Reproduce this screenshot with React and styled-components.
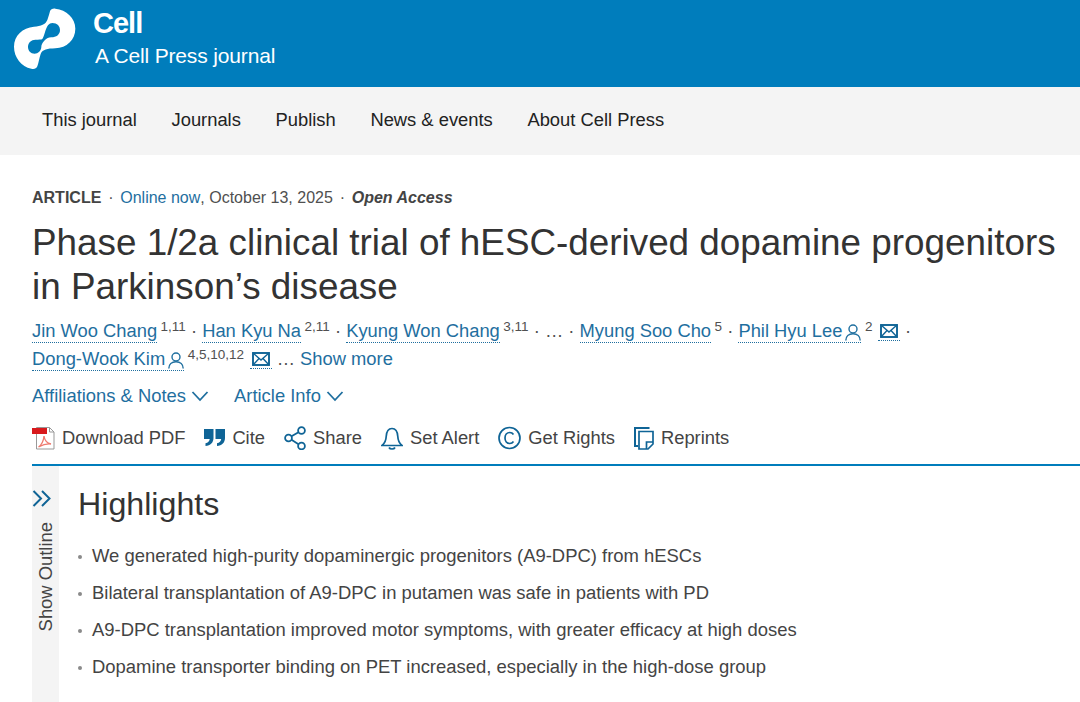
import React from "react";
import styled, { createGlobalStyle } from "styled-components";

const GlobalStyle = createGlobalStyle`
  html, body {
    margin: 0;
    padding: 0;
    background: #fff;
    overflow: hidden;
  }
  body {
    font-family: "Liberation Sans", Arial, sans-serif;
    color: #333;
  }
`;

const Page = styled.div`
  width: 1080px;
  height: 702px;
  overflow: hidden;
`;

const Banner = styled.header`
  height: 87px;
  background: #007dbc;
  display: flex;
  padding-left: 8px;
  gap: 13px;
  box-sizing: border-box;
  color: #fff;
`;

const Logo = styled.svg`
  width: 72px;
  height: 70px;
  margin-top: 4px;
  flex: none;
`;

const BannerText = styled.div`
  display: flex;
  flex-direction: column;
`;

const JournalName = styled.div`
  font-size: 29px;
  font-weight: 700;
  letter-spacing: -1px;
  line-height: 32px;
  margin-top: 7px;
`;

const JournalSub = styled.div`
  font-size: 21px;
  line-height: 26px;
  margin-top: 4px;
  margin-left: 2px;
  letter-spacing: -0.15px;
`;

const NavBar = styled.nav`
  height: 68px;
  background: #f4f4f4;
  display: flex;
  align-items: center;
  gap: 34.7px;
  padding: 0 0 3px 42px;
  box-sizing: border-box;
  font-size: 18.35px;
  color: #222;
`;

const Main = styled.main`
  padding: 33px 0 0 32px;
`;

const MetaLine = styled.div`
  font-size: 16px;
  line-height: 20px;
  color: #505050;
  display: flex;
  white-space: pre;
`;

const ArticleType = styled.b`
  color: #444;
`;

const MetaDot = styled.span`
  margin: 0 6.8px;
`;

const Online = styled.span`
  color: #1f6f9f;
`;

const OpenAccess = styled.b`
  font-style: italic;
  color: #444;
`;

const Title = styled.h1`
  font-size: 36.85px;
  font-weight: 400;
  line-height: 44px;
  margin: 13px 0 0;
  color: #333;
  white-space: nowrap;
`;

const Authors = styled.div`
  margin-top: 8px;
  font-size: 18.35px;
  line-height: 28px;
  color: #505050;
  white-space: nowrap;
`;

const AuthorLine = styled.div`
  height: 28px;
`;

const Author = styled.a`
  color: #1f6f9f;
  border-bottom: 1px dotted #1f6f9f;
  padding-bottom: 1px;
`;

const Sup = styled.sup`
  font-size: 13.5px;
  line-height: 0;
  color: #505050;
  vertical-align: 6px;
  margin-left: 3.5px;
`;

const Dot = styled.span`
  margin: 0 5.1px;
  color: #505050;
`;

const MailLink = styled.a`
  display: inline-block;
  border-bottom: 1px dotted #1f6f9f;
  margin-left: 5.5px;
  padding: 0 2px;
  height: 17px;
  line-height: 14px;
  vertical-align: 1px;
`;

const SmallIcon = styled.svg`
  vertical-align: middle;
`;

const PersonGlyph = styled(SmallIcon)`
  margin-left: 3px;
`;

const ShowMore = styled.a`
  color: #1f6f9f;
`;

const Toggles = styled.div`
  display: flex;
  gap: 25px;
  margin-top: 9px;
  font-size: 18.4px;
  line-height: 28px;
  color: #1f6f9f;
`;

const Toggle = styled.span`
  display: flex;
  align-items: center;
  gap: 5px;
`;

const Actions = styled.div`
  display: flex;
  align-items: center;
  height: 42px;
  margin-top: 7px;
  font-size: 18.35px;
  color: #444;
  gap: 19px;
`;

const Action = styled.span`
  display: flex;
  align-items: center;
  gap: 7px;
`;

const Body = styled.div`
  margin-top: 5px;
  border-top: 2px solid #007dbc;
  display: flex;
  height: 240px;
`;

const Rail = styled.aside`
  width: 27px;
  background: #f4f4f4;
  display: flex;
  flex-direction: column;
  align-items: center;
  padding-top: 24px;
  box-sizing: border-box;
  flex: none;
`;

const OutlineChevron = styled.svg`
  margin-left: -8px;
`;

const RailLabel = styled.span`
  writing-mode: vertical-rl;
  transform: rotate(180deg);
  font-size: 18.4px;
  color: #444;
  margin-top: 15px;
  line-height: 20px;
`;

const Content = styled.section`
  padding: 18px 0 0 19px;
`;

const SectionTitle = styled.h2`
  font-size: 32.2px;
  font-weight: 400;
  line-height: 40px;
  margin: 0 0 13px;
  color: #333;
`;

const List = styled.ul`
  list-style: none;
  margin: 0;
  padding: 0;
`;

const Item = styled.li`
  font-size: 18.44px;
  line-height: 37px;
  height: 37px;
  padding-left: 14px;
  color: #444;
  position: relative;
  white-space: nowrap;

  &::before {
    content: "";
    position: absolute;
    left: 0;
    top: 18px;
    width: 4px;
    height: 4px;
    border-radius: 50%;
    background: #8a8a8a;
  }
`;

const BLUE = "#1f6f9f";
const ICON_BLUE = "#0f6496";

const PersonIcon = () => (
  <PersonGlyph width="16" height="17" viewBox="0 0 16 17" fill="none" stroke={BLUE} strokeWidth="1.4">
    <circle cx="8" cy="5" r="4" />
    <path d="M.8 16.500c0-4.200 3-6.800 7.200-6.800s7.200 2.600 7.200 6.800" />
  </PersonGlyph>
);

const MailIcon = () => (
  <SmallIcon width="18" height="14" viewBox="0 0 18 14" fill="none" stroke={ICON_BLUE} strokeWidth="1.900">
    <rect x="1" y="1" width="16" height="12" />
    <path d="M1 1l8 7 8-7M1 13l6-6.500M17 13l-6-6.500" strokeWidth="1.400" />
  </SmallIcon>
);

const Chevron = () => (
  <svg width="18" height="12" viewBox="0 0 18 12" fill="none" stroke={BLUE} strokeWidth="1.800">
    <path d="M1.500 2l7.500 8 7.500-8" />
  </svg>
);

const PdfIcon = () => (
  <svg width="23" height="23" viewBox="0 0 23 23">
    <path d="M4.500 .5h13l4.500 4.500v17H4.500z" fill="#fff" stroke="#999" strokeWidth="1" />
    <path d="M17.500 .5v4.500H22" fill="none" stroke="#999" strokeWidth="1" />
    <rect x="0" y="1" width="15" height="6" fill="#d8191c" />
    <path d="M6.500 20c3-2 5-6 5.500-11 .5 4 3 7 7 8-4-.5-8 .5-12.500 3z" fill="none" stroke="#ee7a6f" strokeWidth="1.300" />
  </svg>
);

const QuoteIcon = () => (
  <svg width="21" height="18" viewBox="0 0 21 18" fill={ICON_BLUE}>
    <path d="M0 0h9.500v9c0 4.500-3 7.500-8 8v-2.800c2.500-.4 4-2 4.200-4.200H0z" />
    <path d="M11.500 0H21v9c0 4.500-3 7.500-8 8v-2.800c2.500-.4 4-2 4.200-4.200h-5.700z" />
  </svg>
);

const ShareIcon = () => (
  <svg width="22" height="24" viewBox="0 0 22 24" fill="none" stroke={ICON_BLUE} strokeWidth="1.800">
    <circle cx="17.500" cy="4.500" r="3.400" />
    <circle cx="4.500" cy="12" r="3.400" />
    <circle cx="17.500" cy="20" r="3.400" />
    <path d="M7.500 10.300l7-4M7.500 13.800l7 4.400" />
  </svg>
);

const BellIcon = () => (
  <svg width="22" height="24" viewBox="0 0 22 24" fill="none" stroke={ICON_BLUE} strokeWidth="1.700">
    <path d="M1 19.500c2.500-2 4-4.500 4.200-9 .3-5 2.200-8 5.800-8s5.500 3 5.800 8c.2 4.500 1.700 7 4.200 9z" />
    <path d="M8 21.500c1 2 5 2 6 0" />
  </svg>
);

const CopyrightIcon = () => (
  <svg width="23" height="24" viewBox="0 0 23 24" fill="none" stroke={ICON_BLUE} strokeWidth="1.700">
    <circle cx="11.500" cy="12" r="10.500" />
    <path d="M15.500 8.500c-1-1.500-2.300-2-3.700-2-3 0-4.800 2.400-4.800 5.500s1.800 5.500 4.800 5.500c1.400 0 2.700-.5 3.700-2" />
  </svg>
);

const ReprintIcon = () => (
  <svg width="20" height="23" viewBox="0 0 20 23" fill="none" stroke={ICON_BLUE}>
    <path d="M15.500 1H1v18h3" strokeWidth="2" />
    <path d="M5 4.500h14v12.500l-5 5H5z" strokeWidth="1.700" />
    <path d="M19 15h-6.500v7" strokeWidth="1.700" />
  </svg>
);

const DoubleChevron = () => (
  <OutlineChevron width="19" height="17" viewBox="0 0 19 17" fill="none" stroke={ICON_BLUE} strokeWidth="2">
    <path d="M1.500 1l7.500 7.500-7.500 7.500M10 1l7.500 7.500L10 16" />
  </OutlineChevron>
);

const CellLogo = () => (
  <Logo viewBox="0 0 216 210">
    <path
      fill="#fff"
      fillRule="evenodd"
      d="M126 22C128 16 134 13 142 14C175 17 202 42 202 74C202 108 176 131 142 133C118 134 104 136 98 150C94 162 92 176 88 187C85 194 78 196 70 194C40 188 18 160 18 128C18 94 44 71 78 68C100 66 112 62 118 48C121 40 124 30 126 22zM103 105C112 95 112 57 133 57C148 57 156 67 156 78C156 92 145 100 130 100C112 100 100 120 100 128C100 140 90 149 80 149C68 149 60 140 60 129C60 116 70 107 82 107C92 107 100 107 103 105z"
    />
  </Logo>
);

const App = () => {
  return (
    <Page>
      <GlobalStyle />
      <Banner>
        <CellLogo />
        <BannerText>
          <JournalName>Cell</JournalName>
          <JournalSub>A Cell Press journal</JournalSub>
        </BannerText>
      </Banner>
      <NavBar>
        <span>This journal</span>
        <span>Journals</span>
        <span>Publish</span>
        <span>News &amp; events</span>
        <span>About Cell Press</span>
      </NavBar>
      <Main>
        <MetaLine>
          <ArticleType>ARTICLE</ArticleType>
          <MetaDot>·</MetaDot>
          <Online>Online now</Online>
          <span>, October 13, 2025</span>
          <MetaDot>·</MetaDot>
          <OpenAccess>Open Access</OpenAccess>
        </MetaLine>
        <Title>
          Phase 1/2a clinical trial of hESC-derived dopamine progenitors
          <br />
          in Parkinson’s disease
        </Title>
        <Authors>
          <AuthorLine>
            <Author>Jin Woo Chang</Author>
            <Sup>1,11</Sup>
            <Dot>·</Dot>
            <Author>Han Kyu Na</Author>
            <Sup>2,11</Sup>
            <Dot>·</Dot>
            <Author>Kyung Won Chang</Author>
            <Sup>3,11</Sup>
            <Dot>·</Dot>…<Dot>·</Dot>
            <Author>Myung Soo Cho</Author>
            <Sup>5</Sup>
            <Dot>·</Dot>
            <Author>
              Phil Hyu Lee
              <PersonIcon />
            </Author>
            <Sup>2</Sup>
            <MailLink>
              <MailIcon />
            </MailLink>
            <Dot>·</Dot>
          </AuthorLine>
          <AuthorLine>
            <Author>
              Dong-Wook Kim
              <PersonIcon />
            </Author>
            <Sup>4,5,10,12</Sup>
            <MailLink>
              <MailIcon />
            </MailLink>
            {" … "}
            <ShowMore>Show more</ShowMore>
          </AuthorLine>
        </Authors>
        <Toggles>
          <Toggle>
            Affiliations &amp; Notes
            <Chevron />
          </Toggle>
          <Toggle>
            Article Info
            <Chevron />
          </Toggle>
        </Toggles>
        <Actions>
          <Action>
            <PdfIcon />
            Download PDF
          </Action>
          <Action>
            <QuoteIcon />
            Cite
          </Action>
          <Action>
            <ShareIcon />
            Share
          </Action>
          <Action>
            <BellIcon />
            Set Alert
          </Action>
          <Action>
            <CopyrightIcon />
            Get Rights
          </Action>
          <Action>
            <ReprintIcon />
            Reprints
          </Action>
        </Actions>
        <Body>
          <Rail>
            <DoubleChevron />
            <RailLabel>Show Outline</RailLabel>
          </Rail>
          <Content>
            <SectionTitle>Highlights</SectionTitle>
            <List>
              <Item>We generated high-purity dopaminergic progenitors (A9-DPC) from hESCs</Item>
              <Item>Bilateral transplantation of A9-DPC in putamen was safe in patients with PD</Item>
              <Item>A9-DPC transplantation improved motor symptoms, with greater efficacy at high doses</Item>
              <Item>Dopamine transporter binding on PET increased, especially in the high-dose group</Item>
            </List>
          </Content>
        </Body>
      </Main>
    </Page>
  );
};

export default App;
